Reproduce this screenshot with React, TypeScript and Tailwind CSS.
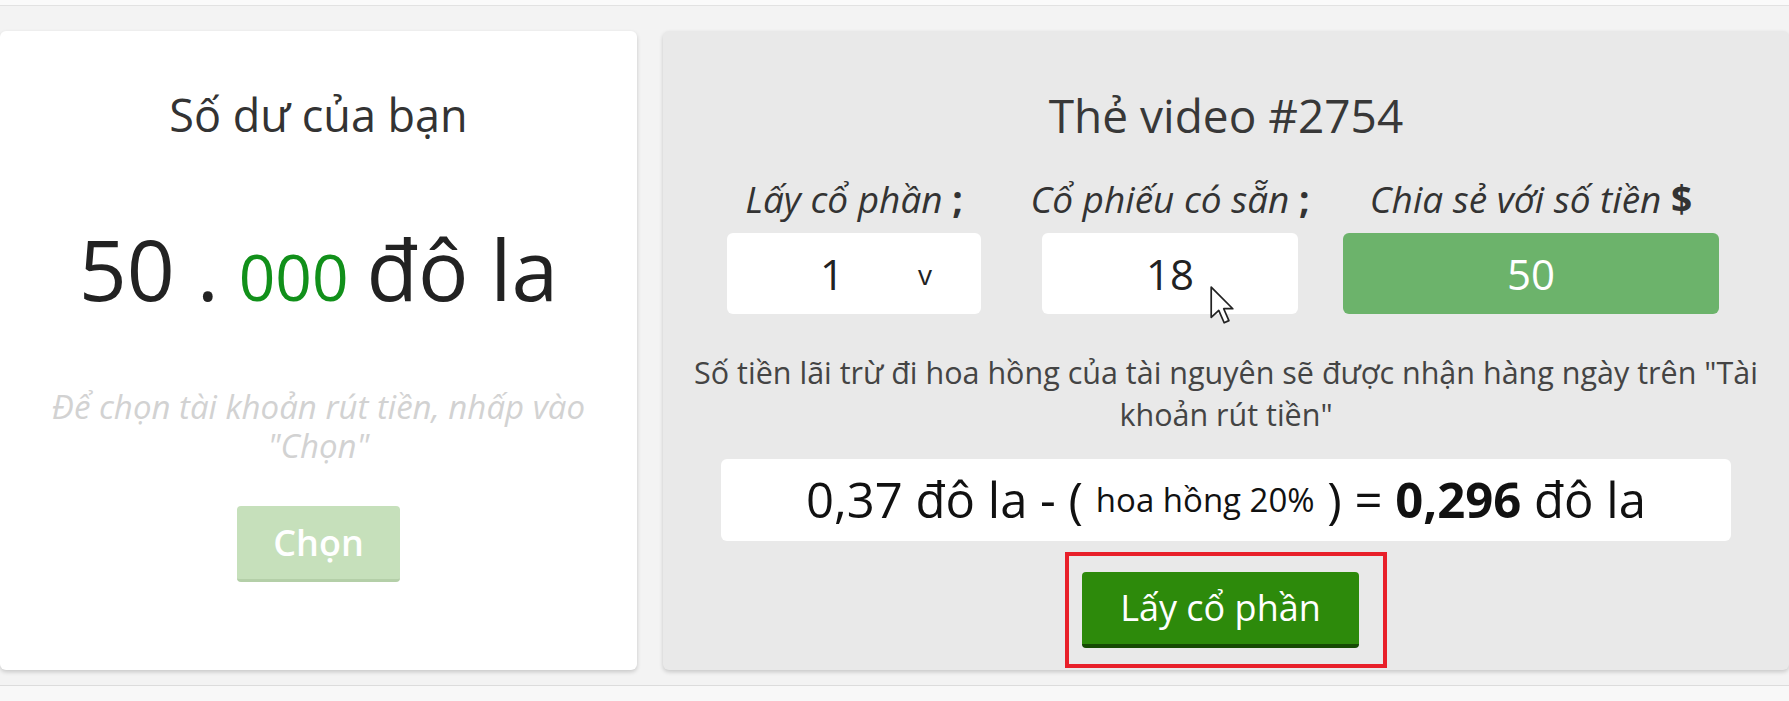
import React from 'react';

const sans = { fontFamily: '"Open Sans", "Noto Sans", sans-serif' };

const Cursor: React.FC = () => (
  <svg width="26" height="41" viewBox="0 0 12 19" className="absolute left-[167px] top-[52px]">
    <path
      d="M1 1 L1 15 L4.5 11.8 L7 17.5 L9.2 16.5 L6.8 11 L11 11 Z"
      fill="#fff"
      stroke="#222"
      strokeWidth="0.8"
      strokeLinejoin="round"
    />
  </svg>
);

const BalanceCard: React.FC = () => (
  <div className="w-[637px] h-[639px] shrink-0 bg-white rounded-[6px] shadow-[0_2px_4px_rgba(0,0,0,0.18)] flex flex-col items-center px-[30px]">
    <h2 className="mt-[56px] text-[45px] leading-[56px] text-[#333]">Số dư của bạn</h2>
    <div className="mt-[84px] flex items-baseline text-[84px] leading-[84px] text-[#222]">
      <span>50 .</span>
      <span className="ml-[20px] text-[64px] text-[#11901a]">000</span>
      <span className="ml-[18px]">đô la</span>
    </div>
    <p className="mt-[68px] text-center italic text-[33px] leading-[39px] text-[#d2d2d2]">
      Để chọn tài khoản rút tiền, nhấp vào "Chọn"
    </p>
    <button className="mt-[41px] w-[163px] h-[76px] rounded-[4px] bg-[#c6e0bb] border-b-[3px] border-[#b4cfa8] text-white text-[36px] font-semibold">
      Chọn
    </button>
  </div>
);

const Field: React.FC<{ label: React.ReactNode; className: string; children: React.ReactNode }> = ({ label, className, children }) => (
  <div className={`flex flex-col items-center ${className}`}>
    <div className="italic text-[37px] leading-[44px] text-[#333] whitespace-nowrap">{label}</div>
    <div className="mt-[12px] w-full">{children}</div>
  </div>
);

const VideoCard: React.FC = () => (
  <div className="flex-1 h-[639px] bg-[#e9e9e9] rounded-[6px] shadow-[0_2px_4px_rgba(0,0,0,0.18)] flex flex-col items-center">
    <h2 className="mt-[56px] text-[46px] leading-[56px] text-[#383838]">Thẻ video #2754</h2>

    <div className="mt-[34px] w-full pl-[64px] flex">
      <Field className="w-[254px]" label={<>Lấy cổ phần <b className="not-italic">;</b></>}>
        <div className="h-[81px] bg-white rounded-[6px] flex items-center text-[42px] text-[#222]">
          <span className="ml-[93px]">1</span>
          <span className="ml-[74px] text-[28px]">v</span>
        </div>
      </Field>
      <Field className="ml-[61px] w-[256px]" label={<>Cổ phiếu có sẵn <b className="not-italic">;</b></>}>
        <div className="relative h-[81px] bg-white rounded-[6px] flex items-center justify-center text-[42px] text-[#222]">
          18
          <Cursor />
        </div>
      </Field>
      <Field className="ml-[45px] w-[376px]" label={<>Chia sẻ với số tiền <b className="not-italic">$</b></>}>
        <div className="h-[81px] bg-[#6cb36b] rounded-[6px] flex items-center justify-center text-[42px] text-white">
          50
        </div>
      </Field>
    </div>

    <p className="mt-[37px] px-[14px] text-center text-[30.5px] leading-[42px] text-[#444]">
      Số tiền lãi trừ đi hoa hồng của tài nguyên sẽ được nhận hàng ngày trên "Tài khoản rút tiền"
    </p>

    <div className="mt-[24px] w-[1010px] h-[82px] bg-white rounded-[6px] flex items-center justify-center text-[49px] text-[#111] whitespace-pre">
      <span>0,37 đô la - </span>
      <span>( </span>
      <span className="text-[33px]">hoa hồng 20%</span>
      <span> ) = </span>
      <span className="font-bold">0,296</span>
      <span> đô la</span>
    </div>

    <div className="mt-[11px] border-[4px] border-[#e8202a] pl-[13px] pr-[24px] pt-[16px] pb-[16px]">
      <button className="w-[277px] h-[76px] rounded-[4px] bg-[#2d8a0b] border-b-[4px] border-[#164a04] text-white text-[36px] font-medium">
        Lấy cổ phần
      </button>
    </div>
  </div>
);

export default function App() {
  return (
    <div className="w-[1789px] h-[701px] bg-[#f3f3f3] flex flex-col overflow-hidden" style={sans}>
      <div className="h-[6px] bg-[#fafafa] border-b border-[#e2e2e2]" />
      <div className="flex gap-[26px] pt-[25px]">
        <BalanceCard />
        <VideoCard />
      </div>
      <div className="mt-auto h-[16px] bg-[#f8f8f8] border-t border-[#dcdcdc]" />
    </div>
  );
}
